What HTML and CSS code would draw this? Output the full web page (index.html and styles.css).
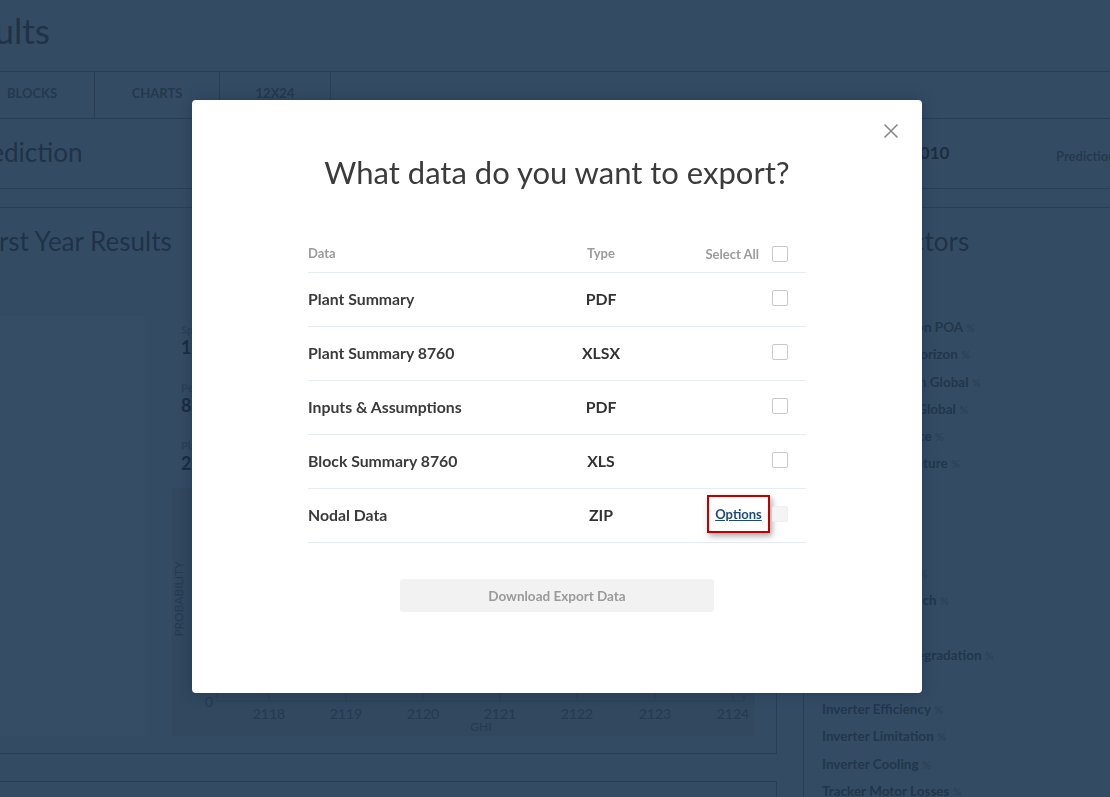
FILE: index.html
```html
<!DOCTYPE html>
<html lang="en">
<head>
<meta charset="utf-8">
<title>Results – Export</title>
<link rel="stylesheet" href="styles.css">
</head>
<body>
<div class="page">
  <header class="page-header">
    <h1 class="page-title">Results</h1>
  </header>
  <nav class="tabs">
    <a class="tab tab-blocks">Blocks</a>
    <a class="tab tab-charts">Charts</a>
    <a class="tab tab-12">12x24</a>
  </nav>
  <section class="summary-bar">
    <h2 class="summary-title">Prediction</h2>
    <div class="summary-year">2010</div>
    <div class="summary-label">Prediction Year</div>
  </section>
  <div class="content">
    <div class="left-col">
      <section class="results-card">
        <h2 class="card-title results-title">First Year Results</h2>
        <div class="results-body">
          <div class="side-panel"></div>
          <div class="results-main">
            <div class="stats">
              <div class="stat"><div class="stat-label">Specific Yield</div><div class="stat-value">1913.4</div></div>
              <div class="stat"><div class="stat-label">Performance Ratio</div><div class="stat-value">82.1</div></div>
              <div class="stat"><div class="stat-label">Plant Output</div><div class="stat-value">2120.6</div></div>
            </div>
            <div class="chart">
              <svg class="chart-svg" viewBox="0 0 583 248" width="583" height="248">
                <g class="grid">
                  <line x1="45" y1="0" x2="45" y2="213"/>
                  <line x1="97" y1="0" x2="97" y2="213"/>
                  <line x1="174" y1="0" x2="174" y2="213"/>
                  <line x1="251" y1="0" x2="251" y2="213"/>
                  <line x1="328" y1="0" x2="328" y2="213"/>
                  <line x1="405" y1="0" x2="405" y2="213"/>
                  <line x1="483" y1="0" x2="483" y2="213"/>
                  <line x1="561" y1="0" x2="561" y2="213"/>
                  <line x1="572" y1="0" x2="572" y2="213"/>
                  <line x1="45" y1="213" x2="572" y2="213"/>
                </g>
                <g class="axis-text">
                  <text x="37" y="219" text-anchor="middle">0</text>
                  <text x="97" y="231" text-anchor="middle">2118</text>
                  <text x="174" y="231" text-anchor="middle">2119</text>
                  <text x="251" y="231" text-anchor="middle">2120</text>
                  <text x="328" y="231" text-anchor="middle">2121</text>
                  <text x="405" y="231" text-anchor="middle">2122</text>
                  <text x="483" y="231" text-anchor="middle">2123</text>
                  <text x="561" y="231" text-anchor="middle">2124</text>
                  <text x="309" y="243" text-anchor="middle" class="axis-title">GHI</text>
                  <text x="0" y="0" text-anchor="middle" class="axis-title" transform="translate(11 111) rotate(-90)">PROBABILITY</text>
                </g>
              </svg>
            </div>
          </div>
        </div>
      </section>
      <section class="next-card"></section>
    </div>
    <section class="loss-card">
      <h2 class="card-title loss-title">Loss Factors</h2>
      <ul class="loss-list">
        <li>Irradiance Gain on POA <span>%</span></li>
        <li>Far Shadings / Horizon <span>%</span></li>
        <li>Near Shadings on Global <span>%</span></li>
        <li>IAM Factors on Global <span>%</span></li>
        <li>PV Loss Irradiance <span>%</span></li>
        <li>PV Loss Temperature <span>%</span></li>
        <li>Soiling Loss <span>%</span></li>
        <li>Array Loss <span>%</span></li>
        <li>Ohmic Wiring <span>%</span></li>
        <li>Module Quality <span>%</span></li>
        <li>Modules Mismatch <span>%</span></li>
        <li>DC Wiring <span>%</span></li>
        <li>Light Induced Degradation <span>%</span></li>
        <li>Ohmic Wiring <span>%</span></li>
        <li>Inverter Efficiency <span>%</span></li>
        <li>Inverter Limitation <span>%</span></li>
        <li>Inverter Cooling <span>%</span></li>
        <li>Tracker Motor Losses <span>%</span></li>
      </ul>
    </section>
  </div>
</div>

<div class="modal" role="dialog" aria-labelledby="export-title">
  <button class="modal-close" aria-label="Close">
    <svg viewBox="0 0 16 16" width="16" height="16"><path d="M1.5 1.5 L14.5 14.5 M14.5 1.5 L1.5 14.5"/></svg>
  </button>
  <h2 class="modal-title" id="export-title">What data do you want to export?</h2>
  <div class="export-table">
    <div class="export-row export-head">
      <div class="col-data">Data</div>
      <div class="col-type">Type</div>
      <div class="col-select">Select All <span class="checkbox"></span></div>
    </div>
    <div class="export-row">
      <div class="col-data">Plant Summary</div>
      <div class="col-type">PDF</div>
      <div class="col-select"><span class="checkbox"></span></div>
    </div>
    <div class="export-row">
      <div class="col-data">Plant Summary 8760</div>
      <div class="col-type">XLSX</div>
      <div class="col-select"><span class="checkbox"></span></div>
    </div>
    <div class="export-row">
      <div class="col-data">Inputs &amp; Assumptions</div>
      <div class="col-type">PDF</div>
      <div class="col-select"><span class="checkbox"></span></div>
    </div>
    <div class="export-row">
      <div class="col-data">Block Summary 8760</div>
      <div class="col-type">XLS</div>
      <div class="col-select"><span class="checkbox"></span></div>
    </div>
    <div class="export-row">
      <div class="col-data">Nodal Data</div>
      <div class="col-type">ZIP</div>
      <div class="col-select col-options"><a class="options-link" href="#">Options</a><span class="checkbox checkbox-faint"></span></div>
    </div>
  </div>
  <button class="download-btn" disabled>Download Export Data</button>
</div>
</body>
</html>
```
FILE: styles.css
```css
* { box-sizing: border-box; }
html, body { margin: 0; padding: 0; }
body {
  width: 1110px;
  height: 797px;
  overflow: hidden;
  background: #344c63;
  font-family: Lato, "Open Sans", Arial, sans-serif;
  color: #1e3046;
}
h1, h2 { margin: 0; font-weight: 400; }

.page { width: 1110px; }

.page-header {
  height: 72px;
  padding-top: 10px;
  border-bottom: 1px solid #2a3e53;
}
.page-title {
  margin-left: -60px;
  font-size: 35px;
  line-height: 40px;
  color: #1f3248;
}

.tabs {
  display: flex;
  height: 47px;
  margin-left: -30px;
  border-bottom: 1px solid #2a3e53;
}
.tab {
  display: flex;
  align-items: center;
  justify-content: center;
  padding-bottom: 5px;
  border-right: 1px solid #2a3e53;
  font-size: 13px;
  font-weight: 700;
  text-transform: uppercase;
  color: #24384e;
}
.tab-blocks { width: 125px; }
.tab-charts { width: 125px; }
.tab-12 { width: 111px; }

.summary-bar {
  display: flex;
  align-items: center;
  height: 70px;
  border-bottom: 1px solid #2a3e53;
  margin-bottom: 18px;
}
.summary-title {
  flex: 1;
  margin-left: -34px;
  padding-bottom: 3px;
  font-size: 26px;
  color: #1f3248;
}
.summary-year {
  width: 146px;
  padding-bottom: 2px;
  font-size: 17px;
  font-weight: 700;
  color: #1c2d40;
}
.summary-label {
  width: 54px;
  padding-top: 4px;
  font-size: 13px;
  font-weight: 700;
  white-space: nowrap;
  color: #24384e;
}

.content {
  display: flex;
  border-top: 1px solid #2a3e53;
}
.left-col { width: 777px; flex: none; }

.results-card {
  height: 546px;
  padding: 0 21px 17px 0;
  border-right: 1px solid #2a3e53;
  border-bottom: 1px solid #2a3e53;
}
.card-title {
  padding-top: 17px;
  font-size: 26px;
  line-height: 32px;
  color: #1f3248;
  white-space: nowrap;
}
.results-title { margin-left: -22px; }

.results-body {
  display: flex;
  height: 420px;
  margin-top: 59px;
}
.side-panel {
  width: 145px;
  margin-right: 27px;
  background: #354e66;
}
.results-main {
  flex: 1;
  display: flex;
  flex-direction: column;
}
.stats {
  display: flex;
  flex-direction: column;
  gap: 24px;
  padding: 7px 0 0 9px;
  margin-bottom: 15px;
}
.stat-label {
  font-size: 11px;
  line-height: 14px;
  font-weight: 700;
  color: #2a4159;
}
.stat-value {
  font-size: 18px;
  line-height: 20px;
  font-weight: 700;
  color: #1b2c3f;
}
.chart {
  flex: 1;
  background: #31485e;
}
.chart-svg { display: block; }
.grid line { stroke: #2c4157; stroke-width: 1; }
.axis-text text { font-family: Lato, Arial, sans-serif; font-size: 14px; fill: #243a52; }
.axis-text .axis-title { font-size: 12px; }

.next-card {
  height: 60px;
  margin-top: 27px;
  border-top: 1px solid #2a3e53;
  border-right: 1px solid #2a3e53;
}

.loss-card {
  flex: 1;
  margin-left: 26px;
  padding-left: 18px;
  border-left: 1px solid #2a3e53;
}
.loss-title { padding-left: 8px; }
.loss-list {
  list-style: none;
  margin: 57px 0 0;
  padding: 0;
}
.loss-list li {
  height: 27.3px;
  font-size: 13.5px;
  line-height: 27.3px;
  font-weight: 700;
  color: #22364c;
  white-space: nowrap;
}
.loss-list li span {
  font-size: 11px;
  line-height: 1;
  font-weight: 700;
  color: #2b425a;
}

/* Modal */
.modal {
  position: fixed;
  left: 192px;
  top: 100px;
  width: 730px;
  height: 593px;
  padding: 0 116px;
  background: #fff;
  border-radius: 4px;
  box-shadow: 0 0 14px rgba(20, 40, 70, 0.45);
  display: flex;
  flex-direction: column;
  align-items: stretch;
}
.modal-close {
  position: absolute;
  right: 23px;
  top: 23px;
  width: 16px;
  height: 16px;
  padding: 0;
  border: 0;
  background: none;
}
.modal-close svg { display: block; }
.modal-close path { stroke: #8a8a8a; stroke-width: 1.6; fill: none; }

.modal-title {
  margin-top: 54px;
  font-size: 31px;
  line-height: 37px;
  text-align: center;
  color: #3b3b3b;
}

.export-table { margin-top: 45px; }
.export-row {
  display: grid;
  grid-template-columns: 233px 120px 1fr;
  align-items: center;
  height: 54px;
  padding-bottom: 3px;
  border-bottom: 1px solid #e6ebf0;
  font-size: 15.8px;
  font-weight: 700;
  color: #3b3b3b;
}
.export-head {
  height: 37px;
  padding-bottom: 2px;
  font-size: 13px;
  color: #9b9b9b;
}
.col-type { text-align: center; color: #333; }
.export-head .col-type { color: #9b9b9b; }
.col-select {
  display: flex;
  justify-content: flex-end;
  align-items: center;
  gap: 13px;
  padding-right: 18px;
}
.export-head .col-select { padding-top: 2px; }
.checkbox {
  display: inline-block;
  width: 16px;
  height: 16px;
  border: 1px solid #c9c9c9;
  border-radius: 2px;
  background: #fff;
}
.col-options { gap: 2px; }
.checkbox-faint {
  border-color: #efefef;
  background: #f4f4f4;
}
.options-link {
  display: flex;
  align-items: center;
  justify-content: center;
  width: 63px;
  height: 38px;
  border: 2px solid #c00000;
  background: #fff;
  box-shadow: 2px 3px 6px rgba(0, 0, 0, 0.35);
  font-size: 13px;
  font-weight: 700;
  color: #1d4a78;
  text-decoration: underline;
}

.download-btn {
  align-self: center;
  width: 314px;
  height: 33px;
  margin-top: 36px;
  border: 0;
  border-radius: 3px;
  background: #f2f2f2;
  font-family: Lato, Arial, sans-serif;
  font-size: 13.5px;
  font-weight: 700;
  color: #9a9a9a;
}
```
